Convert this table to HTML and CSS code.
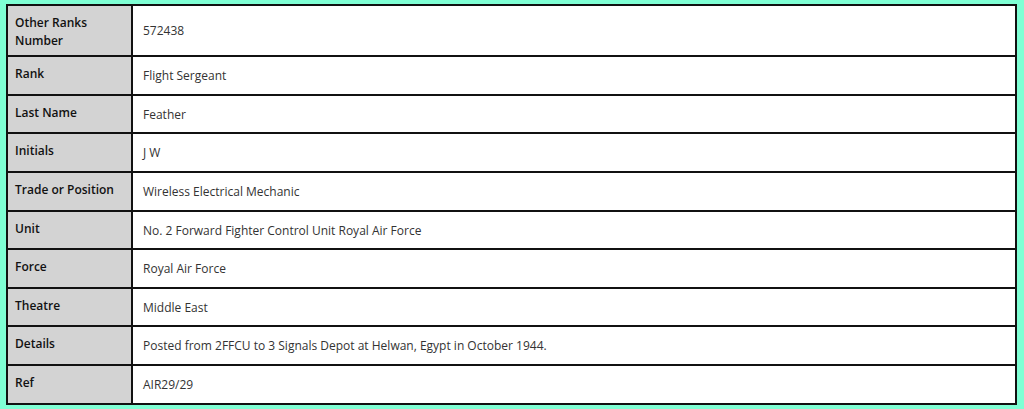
FILE: index.html
```html
<!DOCTYPE html>
<html lang="en">
<head>
<meta charset="utf-8">
<title>Record</title>
<link rel="stylesheet" href="styles.css">
</head>
<body>
<table class="record">
  <tbody>
    <tr><th>Other Ranks Number</th><td>572438</td></tr>
    <tr><th>Rank</th><td>Flight Sergeant</td></tr>
    <tr><th>Last Name</th><td>Feather</td></tr>
    <tr><th>Initials</th><td>J W</td></tr>
    <tr><th>Trade or Position</th><td>Wireless Electrical Mechanic</td></tr>
    <tr><th>Unit</th><td>No. 2 Forward Fighter Control Unit Royal Air Force</td></tr>
    <tr><th>Force</th><td>Royal Air Force</td></tr>
    <tr><th>Theatre</th><td>Middle East</td></tr>
    <tr><th>Details</th><td>Posted from 2FFCU to 3 Signals Depot at Helwan, Egypt in October 1944.</td></tr>
    <tr><th>Ref</th><td>AIR29/29</td></tr>
  </tbody>
</table>
</body>
</html>
```
FILE: styles.css
```css
html, body {
  margin: 0;
  background: #7fffd4;
}
body {
  padding: 4px 7px 4px 6px;
  font-family: "Open Sans", "Noto Sans", sans-serif;
  font-size: 12px;
  color: #222;
}
.record {
  width: 100%;
  border-collapse: separate;
  border-spacing: 0;
  border: 1px solid #111;
  background: #fff;
}
.record th,
.record td {
  border: 1px solid #111;
  line-height: 17.6px;
  text-align: left;
}
.record th {
  width: 108px;
  background: #d3d3d3;
  font-weight: 600;
  vertical-align: top;
  padding: 8px 8px 6px 7px;
  color: #111;
}
.record td {
  vertical-align: middle;
  padding: 10px 10px 9px 10px;
  color: #333;
}
```
